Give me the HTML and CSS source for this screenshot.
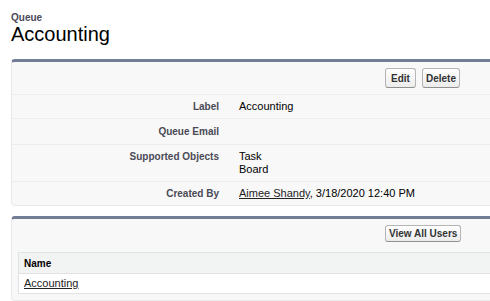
FILE: index.html
```html
<!DOCTYPE html>
<html>
<head>
<meta charset="utf-8">
<link rel="stylesheet" href="styles.css">
</head>
<body>
<div class="page">
  <header class="page-head">
    <div class="page-type">Queue</div>
    <h1 class="page-title">Accounting</h1>
  </header>

  <section class="block">
    <div class="block-head">
      <div class="block-title"></div>
      <div class="btns">
        <button class="btn btn-edit">Edit</button>
        <button class="btn btn-delete">Delete</button>
      </div>
    </div>
    <div class="detail">
      <div class="row">
        <div class="label">Label</div>
        <div class="value">Accounting</div>
      </div>
      <div class="row row-tall">
        <div class="label">Queue Email</div>
        <div class="value"></div>
      </div>
      <div class="row">
        <div class="label">Supported Objects</div>
        <div class="value">Task<br>Board</div>
      </div>
      <div class="row row-last">
        <div class="label">Created By</div>
        <div class="value"><a class="link" href="#">Aimee Shandy</a>, 3/18/2020 12:40 PM</div>
      </div>
    </div>
  </section>

  <section class="block block-list">
    <div class="block-head block-head-small">
      <div class="block-title"></div>
      <div class="btns">
        <button class="btn btn-small">View All Users</button>
      </div>
    </div>
    <div class="list-body">
      <div class="list">
        <div class="list-header">Name</div>
        <div class="list-row"><a class="link" href="#">Accounting</a></div>
      </div>
    </div>
  </section>
</div>
</body>
</html>
```

FILE: styles.css
```css
html, body {
  margin: 0;
  padding: 0;
  overflow: hidden;
  background: #fff;
}

body {
  font-family: "Liberation Sans", Arial, sans-serif;
  color: #000;
}

.page {
  width: 760px;
  padding: 12px 0 0 11px;
}

.page-head {
  margin-bottom: 15px;
}

.page-type {
  font-size: 10px;
  line-height: 12px;
  font-weight: bold;
  color: #4a4a56;
}

.page-title {
  margin: 0;
  font-size: 20px;
  line-height: 20px;
  font-weight: normal;
  color: #000;
}

.block {
  background: #f8f8f8;
  border: 1px solid #eaeaea;
  border-top: 3px solid #737e96;
  border-radius: 4px;
  margin-bottom: 10px;
}

.block-head {
  display: grid;
  grid-template-columns: 373px auto;
  padding: 6px 0 6px;
  border-bottom: 1px solid #ececec;
}

.block-head-small {
  padding: 6px 0 5px;
  border-bottom: none;
}

.btns {
  display: flex;
  gap: 6px;
}

.btn {
  font-family: "Liberation Sans", Arial, sans-serif;
  font-size: 10px;
  font-weight: bold;
  color: #333;
  background: linear-gradient(#ffffff, #ececec);
  border: 1px solid #b5b5b5;
  border-bottom-color: #8f8f8f;
  border-radius: 3px;
  height: 20px;
  padding: 0 3px;
  margin: 0;
  cursor: pointer;
}

.btn-edit {
  min-width: 31px;
}

.btn-small {
  height: 17px;
  padding: 0 3px;
}

.row {
  display: grid;
  grid-template-columns: 217px 1fr;
  border-bottom: 1px solid #ececec;
}

.row-last {
  border-bottom: none;
}

.label {
  text-align: right;
  font-size: 10px;
  font-weight: bold;
  color: #4a4a56;
  line-height: 13px;
  padding: 5px 10px 5px 0;
}

.value {
  font-size: 11px;
  line-height: 13px;
  color: #000;
  padding: 5px 0 5px 10px;
}

.row-tall .label,
.row-tall .value {
  padding-top: 6px;
  padding-bottom: 6px;
}

.link {
  color: #222;
  text-decoration: underline;
}

.list-body {
  padding: 0 0 6px 6px;
  margin-top: 5px;
}

.list {
  border: 1px solid #e0e3e5;
  border-top: none;
  background: #fff;
}

.list-header {
  background: #f2f3f3;
  border-top: 1px solid #e0e3e5;
  border-bottom: 1px solid #e0e3e5;
  font-size: 10px;
  font-weight: bold;
  color: #000;
  line-height: 13px;
  padding: 4px 5px 3px;
}

.list-row {
  font-size: 11px;
  line-height: 13px;
  padding: 3px 5px 3px;
  background: #fff;
}
```
